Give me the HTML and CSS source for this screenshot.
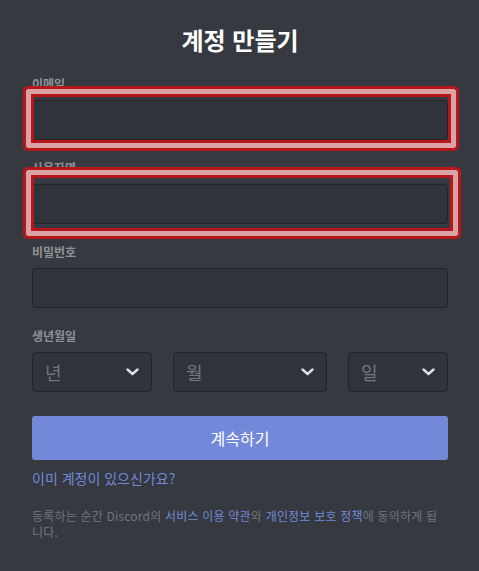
FILE: index.html
```html
<!DOCTYPE html>
<html lang="ko">
<head>
  <meta charset="UTF-8" />
  <meta name="viewport" content="width=device-width, initial-scale=1.0"/>
  <title>계정 만들기</title>
  <link rel="stylesheet" href="styles.css">
</head>
<body>

  <main class="registro">
    <h1>계정 만들기</h1>

    <form class="formulario" onsubmit="return false">
      <div class="campo">
        <label for="email">이메일</label>
        <div class="caja marcada marca-email">
          <input id="email" type="email">
        </div>
      </div>

      <div class="campo">
        <label for="usuario">사용자명</label>
        <div class="caja marcada marca-usuario">
          <input id="usuario" type="text">
        </div>
      </div>

      <div class="campo">
        <label for="clave">비밀번호</label>
        <div class="caja">
          <input id="clave" type="password">
        </div>
      </div>

      <div class="campo campo-fecha">
        <label>생년월일</label>
        <div class="fecha">
          <div class="selector">
            <span>년</span>
            <svg width="13" height="8" viewBox="0 0 13 8"><polyline points="1.5,1.5 6.5,6 11.5,1.5" /></svg>
          </div>
          <div class="selector">
            <span>월</span>
            <svg width="13" height="8" viewBox="0 0 13 8"><polyline points="1.5,1.5 6.5,6 11.5,1.5" /></svg>
          </div>
          <div class="selector">
            <span>일</span>
            <svg width="13" height="8" viewBox="0 0 13 8"><polyline points="1.5,1.5 6.5,6 11.5,1.5" /></svg>
          </div>
        </div>
      </div>

      <button class="continuar" type="submit">계속하기</button>
      <a class="ya-tengo" href="#">이미 계정이 있으신가요?</a>

      <p class="terminos">등록하는 순간 Discord의 <a href="#">서비스 이용 약관</a>와 <a href="#">개인정보 보호 정책</a>에 동의하게 됩니다.</p>
    </form>
  </main>

</body>
</html>
```

FILE: styles.css
```css
/* --------- Base --------- */
html, body { background:#36393f }
body {
  margin:0;
  font-family: "Noto Sans CJK KR", "Noto Sans", sans-serif;
  color:#dcddde;
}
.registro { width:416px; margin:0 0 0 32px; padding:24px 0 }
.registro h1 {
  margin:0 0 20px; text-align:center;
  font-size:24px; line-height:32px; font-weight:700; color:#fff;
}

/* --------- Campos --------- */
.campo { margin-bottom:20px }
.campo label {
  display:block; margin-bottom:8px;
  font-size:12px; line-height:16px; font-weight:700; color:#8e9297;
}
.caja { position:relative }
.caja input {
  display:block; box-sizing:border-box;
  width:100%; height:40px; margin:0; padding:0 10px;
  background:#303339; border:1px solid #222428; border-radius:3px;
  color:#dcddde; font-size:16px; outline:none;
}

/* marcas rojas encima de los campos */
.marcada::after {
  content:""; position:absolute; box-sizing:border-box;
  border:3px solid #b5171c; border-radius:5px;
  box-shadow: inset 0 0 0 5px #dca3a5, inset 0 0 0 8px #b5171c;
  pointer-events:none;
}
.marca-email::after { top:-14px; left:-9px; right:-11px; bottom:-11px }
.marca-usuario::after { top:-17px; left:-9px; right:-13px; bottom:-15px }

/* --------- Fecha --------- */
.campo-fecha { margin-bottom:24px }
.fecha {
  display:grid; grid-template-columns:120px 154px 100px;
  justify-content:space-between;
}
.selector {
  box-sizing:border-box; height:40px; padding:0 12px 0 12px;
  display:flex; align-items:center; justify-content:space-between;
  background:#303339; border:1px solid #222428; border-radius:4px;
}
.selector span { font-size:18px; color:#72767d }
.selector svg polyline { fill:none; stroke:#dcddde; stroke-width:2.4; stroke-linecap:round; stroke-linejoin:round }

/* --------- Boton y enlaces --------- */
.continuar {
  display:block; width:100%; height:44px; margin:0;
  background:#7289da; color:#fff;
  border:none; border-radius:3px; cursor:pointer;
  font-family:inherit; font-size:16px; font-weight:400;
}
.ya-tengo {
  display:inline-block; margin-top:8px;
  font-size:14px; line-height:20px; color:#7289da; text-decoration:none;
}
.terminos {
  margin:19px 0 0;
  font-size:12px; line-height:16px; color:#72767d;
  letter-spacing:0.2px;
}
.terminos a { color:#7289da; text-decoration:none }
```
